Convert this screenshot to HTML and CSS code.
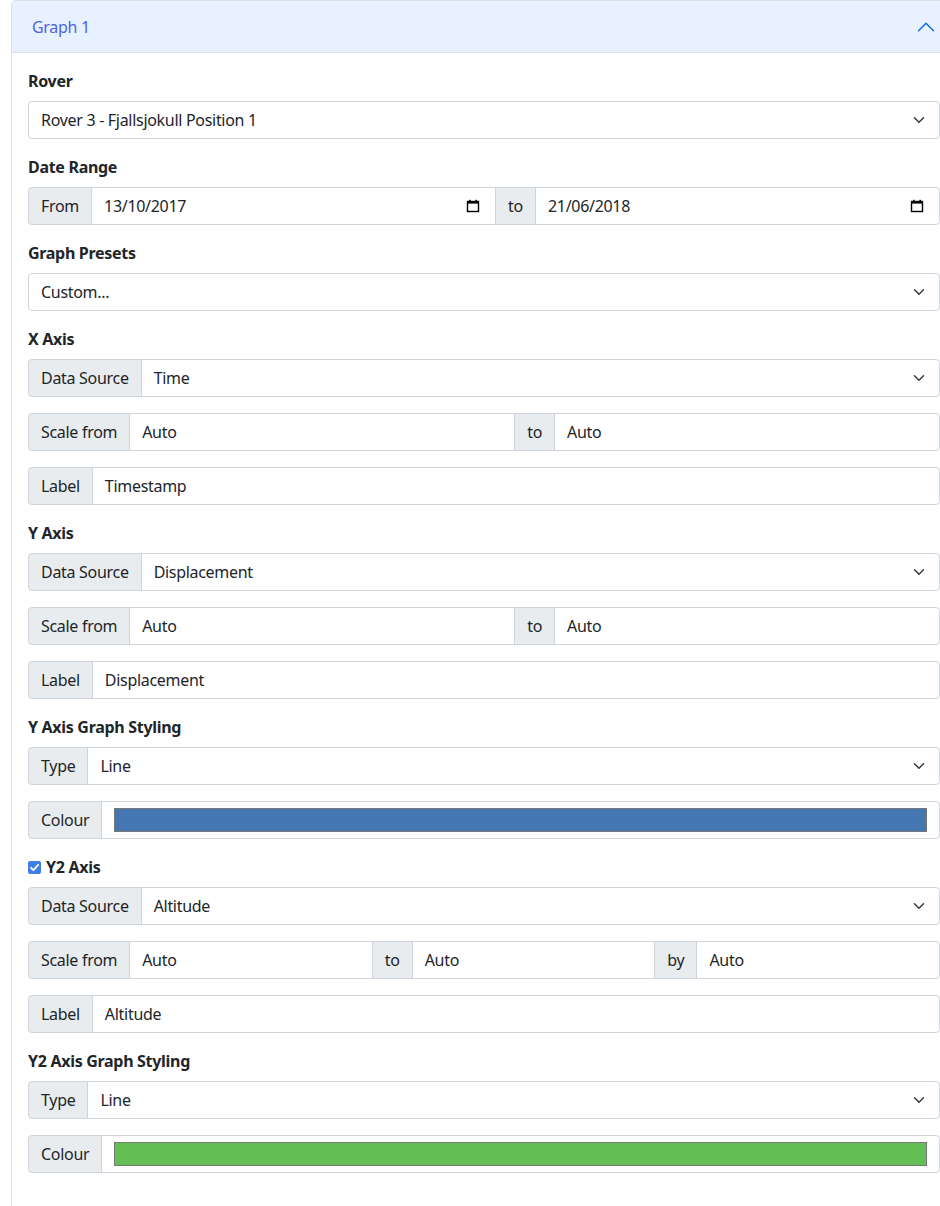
FILE: index.html
```html
<!DOCTYPE html>
<html lang="en">
<head>
<meta charset="utf-8">
<title>Graph 1</title>
<link rel="stylesheet" href="styles.css">
</head>
<body>
<div class="page">
  <div class="accordion-item">
    <div class="accordion-header">
      <span class="accordion-title">Graph 1</span>
      <svg class="accordion-icon" width="20" height="20" viewBox="0 0 16 16"><path fill="#0c63e4" d="M1.646 4.646a.5.5 0 0 1 .708 0L8 10.293l5.646-5.647a.5.5 0 0 1 .708.708l-6 6a.5.5 0 0 1-.708 0l-6-6a.5.5 0 0 1 0-.708z" transform="rotate(180 8 8)"/></svg>
    </div>
    <div class="accordion-body">

      <div class="field">
        <div class="form-label">Rover</div>
        <div class="control select">Rover 3 - Fjallsjokull Position 1<svg class="caret" width="16" height="12" viewBox="0 0 16 16"><path fill="none" stroke="#343a40" stroke-linecap="round" stroke-linejoin="round" stroke-width="2" d="m2 5 6 6 6-6"/></svg></div>
      </div>

      <div class="field">
        <div class="form-label">Date Range</div>
        <div class="input-group">
          <span class="addon">From</span>
          <div class="control date">13/10/2017<svg class="cal" width="14" height="14" viewBox="0 0 14 14"><rect x="1.5" y="2.5" width="11" height="10" fill="none" stroke="#000" stroke-width="1.4"/><rect x="1" y="2" width="12" height="2.6" fill="#000"/><rect x="3" y="0.8" width="1.6" height="2" fill="#000"/><rect x="9.4" y="0.8" width="1.6" height="2" fill="#000"/></svg></div>
          <span class="addon">to</span>
          <div class="control date">21/06/2018<svg class="cal" width="14" height="14" viewBox="0 0 14 14"><rect x="1.5" y="2.5" width="11" height="10" fill="none" stroke="#000" stroke-width="1.4"/><rect x="1" y="2" width="12" height="2.6" fill="#000"/><rect x="3" y="0.8" width="1.6" height="2" fill="#000"/><rect x="9.4" y="0.8" width="1.6" height="2" fill="#000"/></svg></div>
        </div>
      </div>

      <div class="field">
        <div class="form-label">Graph Presets</div>
        <div class="control select">Custom...<svg class="caret" width="16" height="12" viewBox="0 0 16 16"><path fill="none" stroke="#343a40" stroke-linecap="round" stroke-linejoin="round" stroke-width="2" d="m2 5 6 6 6-6"/></svg></div>
      </div>

      <div class="field">
        <div class="form-label">X Axis</div>
        <div class="input-group">
          <span class="addon">Data Source</span>
          <div class="control select">Time<svg class="caret" width="16" height="12" viewBox="0 0 16 16"><path fill="none" stroke="#343a40" stroke-linecap="round" stroke-linejoin="round" stroke-width="2" d="m2 5 6 6 6-6"/></svg></div>
        </div>
        <div class="input-group">
          <span class="addon">Scale from</span>
          <div class="control">Auto</div>
          <span class="addon">to</span>
          <div class="control">Auto</div>
        </div>
        <div class="input-group">
          <span class="addon">Label</span>
          <div class="control">Timestamp</div>
        </div>
      </div>

      <div class="field">
        <div class="form-label">Y Axis</div>
        <div class="input-group">
          <span class="addon">Data Source</span>
          <div class="control select">Displacement<svg class="caret" width="16" height="12" viewBox="0 0 16 16"><path fill="none" stroke="#343a40" stroke-linecap="round" stroke-linejoin="round" stroke-width="2" d="m2 5 6 6 6-6"/></svg></div>
        </div>
        <div class="input-group">
          <span class="addon">Scale from</span>
          <div class="control">Auto</div>
          <span class="addon">to</span>
          <div class="control">Auto</div>
        </div>
        <div class="input-group">
          <span class="addon">Label</span>
          <div class="control">Displacement</div>
        </div>
      </div>

      <div class="field">
        <div class="form-label">Y Axis Graph Styling</div>
        <div class="input-group">
          <span class="addon">Type</span>
          <div class="control select">Line<svg class="caret" width="16" height="12" viewBox="0 0 16 16"><path fill="none" stroke="#343a40" stroke-linecap="round" stroke-linejoin="round" stroke-width="2" d="m2 5 6 6 6-6"/></svg></div>
        </div>
        <div class="input-group">
          <span class="addon">Colour</span>
          <div class="control colour"><span class="swatch swatch-blue"></span></div>
        </div>
      </div>

      <div class="field">
        <div class="form-label check-label"><span class="checkbox"><svg width="13" height="13" viewBox="0 0 13 13"><path d="M3 6.8 5.4 9.2 10.2 3.9" fill="none" stroke="#fff" stroke-width="1.8" stroke-linecap="round" stroke-linejoin="round"/></svg></span>Y2 Axis</div>
        <div class="input-group">
          <span class="addon">Data Source</span>
          <div class="control select">Altitude<svg class="caret" width="16" height="12" viewBox="0 0 16 16"><path fill="none" stroke="#343a40" stroke-linecap="round" stroke-linejoin="round" stroke-width="2" d="m2 5 6 6 6-6"/></svg></div>
        </div>
        <div class="input-group">
          <span class="addon">Scale from</span>
          <div class="control">Auto</div>
          <span class="addon">to</span>
          <div class="control">Auto</div>
          <span class="addon">by</span>
          <div class="control">Auto</div>
        </div>
        <div class="input-group">
          <span class="addon">Label</span>
          <div class="control">Altitude</div>
        </div>
      </div>

      <div class="field">
        <div class="form-label">Y2 Axis Graph Styling</div>
        <div class="input-group">
          <span class="addon">Type</span>
          <div class="control select">Line<svg class="caret" width="16" height="12" viewBox="0 0 16 16"><path fill="none" stroke="#343a40" stroke-linecap="round" stroke-linejoin="round" stroke-width="2" d="m2 5 6 6 6-6"/></svg></div>
        </div>
        <div class="input-group">
          <span class="addon">Colour</span>
          <div class="control colour"><span class="swatch swatch-green"></span></div>
        </div>
      </div>

    </div>
  </div>
</div>
</body>
</html>
```
FILE: styles.css
```css
html, body {
  margin: 0;
  padding: 0;
  background: #fff;
}
body {
  font-family: "Noto Sans", "Open Sans", sans-serif;
  font-size: 16px;
  line-height: 24px;
  letter-spacing: -0.3px;
  color: #212529;
}
.page {
  width: 940px;
  height: 1206px;
  overflow: hidden;
}
.accordion-item {
  margin-left: 11px;
  width: 944px;
  border: 1px solid #dee2e6;
  border-radius: 4px 4px 0 0;
  padding-bottom: 60px;
}
.accordion-header {
  height: 51px;
  display: flex;
  align-items: center;
  justify-content: space-between;
  padding: 0 20px;
  background: #e7f1ff;
  border-bottom: 1px solid #dee2e6;
  border-radius: 3px 3px 0 0;
  color: #5363e4;
}
.accordion-icon {
  display: block;
}
.accordion-body {
  padding: 16px;
  display: flex;
  flex-direction: column;
  gap: 16px;
}
.field {
  display: flex;
  flex-direction: column;
  gap: 16px;
}
.field > .control {
  flex: none;
}
.form-label {
  font-weight: 700;
  margin-bottom: -8px;
}
.check-label {
  display: flex;
  align-items: center;
  gap: 5px;
}
.checkbox {
  width: 13px;
  height: 13px;
  border-radius: 2px;
  background: #3d7ee8;
  display: flex;
}
.control {
  flex: 1;
  min-width: 0;
  height: 38px;
  box-sizing: border-box;
  border: 1px solid #ced4da;
  border-radius: 4px;
  padding: 0 12px;
  display: flex;
  align-items: center;
  justify-content: space-between;
  background: #fff;
  white-space: nowrap;
}
.select .caret {
  flex: none;
}
.date .cal {
  flex: none;
  margin-right: 3px;
}
.input-group {
  display: flex;
}
.addon {
  flex: none;
  height: 38px;
  box-sizing: border-box;
  padding: 0 12px;
  display: flex;
  align-items: center;
  background: #e9ecef;
  border: 1px solid #ced4da;
  white-space: nowrap;
}
.input-group > * {
  border-radius: 0;
  margin-left: -1px;
}
.input-group > :first-child {
  margin-left: 0;
  border-radius: 4px 0 0 4px;
}
.input-group > :last-child {
  border-radius: 0 4px 4px 0;
}
.colour {
  padding: 6px 12px;
}
.swatch {
  display: block;
  width: 100%;
  height: 24px;
  box-sizing: border-box;
  border: 1px solid #777;
}
.swatch-blue { background: #4477b2; }
.swatch-green { background: #63be54; }
```
